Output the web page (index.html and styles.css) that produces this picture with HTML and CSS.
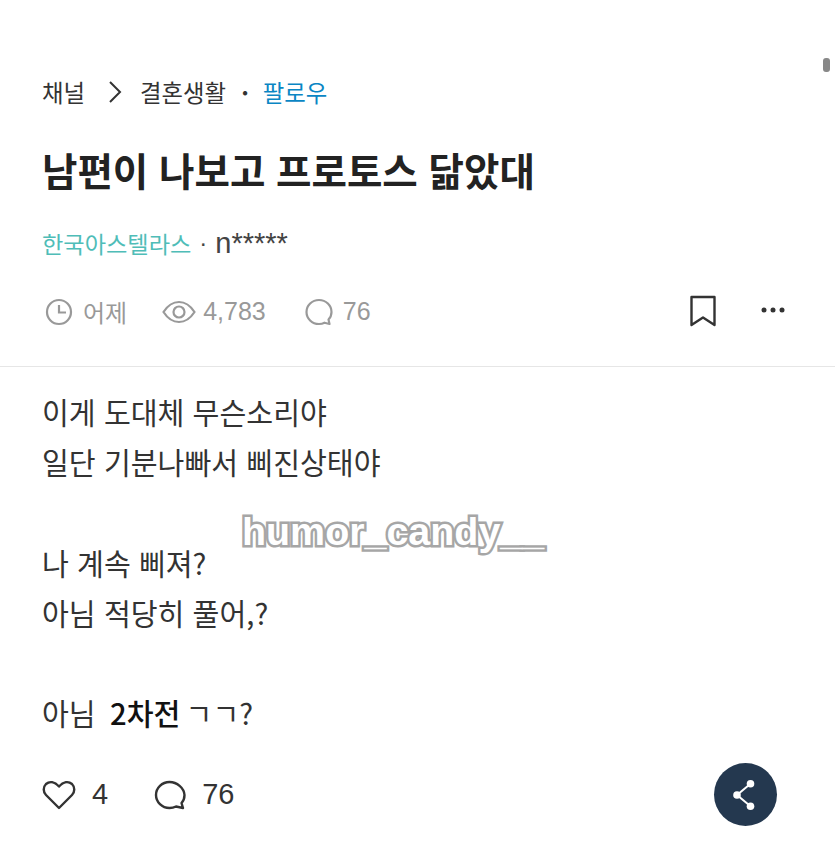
FILE: index.html
```html
<!DOCTYPE html>
<html lang="ko">
<head>
    <meta charset="UTF-8">
    <title>남편이 나보고 프로토스 닮았대</title>
    <link rel="stylesheet" href="styles.css">
</head>
<body>
    <div class="scroll-thumb"></div>
    <header class="post-head">
        <nav class="crumbs">
            <span>채널</span>
            <svg class="crumb-arrow" width="14" height="24" viewBox="0 0 14 24"><path d="M2 2l10 10L2 22" fill="none" stroke="#333" stroke-width="2"/></svg>
            <span>결혼생활</span>
            <span class="crumb-dot">·</span>
            <span class="follow">팔로우</span>
        </nav>
        <h1>남편이 나보고 프로토스 닮았대</h1>
        <div class="author"><span class="company">한국아스텔라스</span><span class="dot">·</span><span class="nick">n*****</span></div>
        <div class="meta">
            <div class="meta-stats">
                <span class="stat stat-date">
                    <svg width="28" height="28" viewBox="0 0 28 28" fill="none" stroke="#999" stroke-width="2.2"><circle cx="14" cy="14" r="12"/><path d="M14 7v7.5h7"/></svg>
                    어제
                </span>
                <span class="stat stat-views">
                    <svg width="34" height="24" viewBox="0 0 34 24" fill="none" stroke="#999" stroke-width="2.2"><path d="M1.5 12C6 5 11 2 17 2s11 3 15.500 10C28 19 23 22 17 22S6 19 1.500 12z"/><circle cx="17" cy="12" r="5.500"/></svg>
                    4,783
                </span>
                <span class="stat stat-comments">
                    <svg width="30" height="28" viewBox="0 0 30 28" fill="none" stroke="#999" stroke-width="2.2" stroke-linejoin="round"><path d="M15 2C8 2 2.500 7.500 2.500 14S8 26 15 26c2 0 4-.5 5.500-1.300l5 1.300-1-4.500c2-2 3-4.700 3-7.500C27.500 7.500 22 2 15 2z"/></svg>
                    76
                </span>
            </div>
            <div class="meta-actions">
                <svg width="28" height="32" viewBox="0 0 28 32" fill="none" stroke="#333" stroke-width="2.4" stroke-linejoin="round"><path d="M2.500 2h23v28L14 22.500 2.500 30z"/></svg>
                <svg class="more-icon" width="24" height="6" viewBox="0 0 24 6" fill="#333"><circle cx="3" cy="3" r="2.500"/><circle cx="12" cy="3" r="2.500"/><circle cx="21" cy="3" r="2.500"/></svg>
            </div>
        </div>
    </header>

    <main class="post-body">
        <p>이게 도대체 무슨소리야</p>
        <p>일단 기분나빠서 삐진상태야</p>
        <p class="gap">나 계속 삐져?</p>
        <p>아님 적당히 풀어,?</p>
        <p class="gap">아님 &nbsp;<b>2차전</b> ㄱㄱ?</p>
    </main>

    <footer class="post-foot">
        <div class="foot-stats">
            <span class="foot-stat">
                <svg width="34" height="30" viewBox="0 0 34 30" fill="none" stroke="#333" stroke-width="2.400" stroke-linejoin="round"><path d="M17 28L4 15C1 12 1 7 4 4c3.500-3 8.500-2.500 13 2.500C21.500 1.500 26.500 1 30 4c3 3 3 8 0 11z"/></svg>
                4
            </span>
            <span class="foot-stat">
                <svg width="32" height="30" viewBox="0 0 32 30" fill="none" stroke="#333" stroke-width="2.400" stroke-linejoin="round"><path d="M15.500 2C8 2 2 8 2 15s6 13 13.500 13c2.500 0 4.500-.5 6.500-1.500l7 1.500-1.500-5c2-2 3-5 3-8C30 8 23 2 15.500 2z"/></svg>
                76
            </span>
        </div>
        <button class="share-btn">
            <svg width="26" height="32" viewBox="0 0 26 32" fill="none" stroke="#fff" stroke-width="2"><path d="M17.500 4.700L4 16l13.500 11.300"/><g fill="#fff" stroke="none"><circle cx="17.500" cy="4.700" r="3.800"/><circle cx="4" cy="16" r="3.800"/><circle cx="17.500" cy="27.300" r="3.800"/></g></svg>
        </button>
    </footer>

    <div class="watermark">humor_candy__</div>
</body>
</html>
```

FILE: styles.css
```css
body {
    margin: 0;
    height: 864px;
    overflow: hidden;
    position: relative;
    background: #fff;
    color: #333;
    font-family: "Liberation Sans", "Noto Sans CJK KR", sans-serif;
}
.scroll-thumb {
    position: absolute;
    top: 58px;
    right: 5px;
    width: 7px;
    height: 14px;
    border-radius: 3px;
    background: #888;
}
.post-head {
    padding: 76px 50px 0 42px;
    height: 367px;
    box-sizing: border-box;
    border-bottom: 1px solid #e6e6e6;
}
.crumbs {
    display: flex;
    align-items: center;
    height: 32px;
    font-size: 23.400px;
    font-family: "Noto Sans CJK KR", sans-serif;
}
.crumb-arrow {
    margin: 0 18px 0 23px;
}
.crumb-dot {
    margin: 0 14px 0 15px;
    font-weight: bold;
}
.follow {
    color: #0a86c4;
}
h1 {
    margin: 33px 0 0;
    font-size: 38.500px;
    line-height: 56px;
    font-weight: bold;
    color: #222;
    font-family: "Noto Sans CJK KR", sans-serif;
}
.author {
    display: flex;
    align-items: center;
    margin-top: 28px;
    height: 36px;
    color: #444;
}
.company {
    font-size: 23.200px;
    color: #4fbdb8;
    font-family: "Noto Sans CJK KR", sans-serif;
}
.dot {
    margin: 0 8px;
    font-size: 24px;
}
.nick {
    font-size: 29px;
}
.meta {
    display: flex;
    justify-content: space-between;
    align-items: center;
    margin-top: 31px;
}
.meta-stats {
    display: flex;
    gap: 35px;
    padding: 2px 0 0 3px;
}
.stat {
    display: flex;
    align-items: center;
    gap: 10px;
    font-size: 25px;
    color: #999;
}
.stat-date {
    font-size: 24px;
}
.stat-views {
    gap: 7px;
}
.stat-comments {
    gap: 9px;
    margin-left: 3px;
}
.meta-actions {
    display: flex;
    align-items: center;
    gap: 44px;
}
.more-icon {
    margin-top: -2px;
}
.post-body {
    padding: 19px 42px 0;
    font-size: 29.200px;
    line-height: 50.200px;
    font-family: "Noto Sans CJK KR", sans-serif;
}
.post-body p {
    margin: 0;
}
.post-body .gap {
    margin-top: 50.200px;
}
.post-body b {
    margin: 0 -3px 0 -2px;
    font-weight: 500;
    color: #111;
}
.post-foot {
    display: flex;
    justify-content: space-between;
    align-items: center;
    padding: 26px 58px 0 42px;
}
.foot-stats {
    display: flex;
    gap: 46px;
}
.foot-stat {
    display: flex;
    align-items: center;
    gap: 16px;
    font-size: 29px;
}
.share-btn {
    display: flex;
    align-items: center;
    justify-content: center;
    width: 63px;
    height: 63px;
    padding: 0;
    border: none;
    border-radius: 50%;
    background: #24384f;
}
.watermark {
    position: absolute;
    top: 509px;
    left: 242px;
    font-family: "Liberation Sans", sans-serif;
    font-weight: bold;
    font-size: 39.400px;
    color: #fff;
    -webkit-text-stroke: 5px #a6a6a6;
    paint-order: stroke fill;
}
```
